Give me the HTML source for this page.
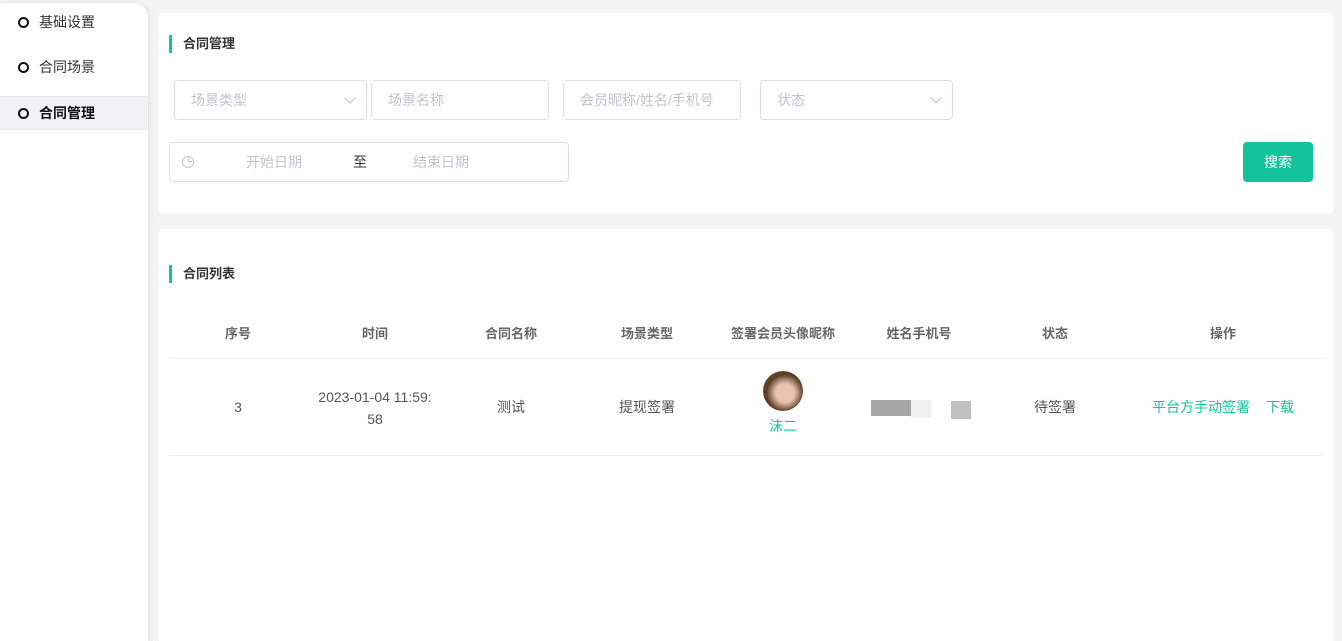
<!DOCTYPE html>
<html style="width:1342px;height:641px;overflow:hidden"><head><meta charset="utf-8"><style>
*{box-sizing:border-box;margin:0;padding:0}
body{width:1342px;height:641px;overflow:hidden;background:#f4f4f4;font-family:"Liberation Sans","Noto Sans CJK SC",sans-serif;position:relative}
.side{position:absolute;left:0;top:3px;width:148px;height:638px;background:#fff;border-top-right-radius:14px;box-shadow:2px 0 4px rgba(0,0,0,.08)}
.mi{position:absolute;left:0;width:148px;height:34px;font-size:14px;color:#333;display:flex;align-items:center;padding-left:18px}
.mi i{width:11px;height:11px;border:2px solid #111;border-radius:50%;margin-right:10px}
.mi.on{background:#f2f2f4;border-top:1px solid #eaeaee;border-bottom:1px solid #eaeaee;font-weight:bold;color:#111}
.card{position:absolute;left:159px;width:1174px;background:#fff;border-radius:3px}
.tt{position:absolute;left:10px;font-size:13px;font-weight:bold;color:#333;padding-left:14px;height:18px;line-height:18px}
.tt:before{content:"";position:absolute;left:0;top:0;width:3px;height:18px;background:#13c39c}
.in{position:absolute;height:40px;border:1px solid #dcdfe6;border-radius:4px;font-size:14px;color:#c0c4cc;line-height:38px;padding-left:16px}
.arr{position:absolute;right:12px;top:13px;width:8px;height:8px;border-right:1px solid #c0c4cc;border-bottom:1px solid #c0c4cc;transform:rotate(45deg)}
.btn{position:absolute;left:1084px;top:129px;width:70px;height:40px;background:#13c39c;color:#fff;border-radius:4px;font-size:14px;text-align:center;line-height:40px}
.th,.td{position:absolute;font-size:14px;text-align:center;transform:translateX(-50%);white-space:nowrap;line-height:18px}
.th{top:96px;color:#666;font-weight:bold;font-size:13px}
.td{color:#555;top:169px}
.line{position:absolute;left:10px;width:1154px;height:1px;background:#ebeef5}
</style></head><body>
<div class="side">
<div class="mi" style="top:2px"><i></i>基础设置</div>
<div class="mi" style="top:47px"><i></i>合同场景</div>
<div class="mi on" style="top:93px"><i></i>合同管理</div>
</div>
<div class="card" style="top:13px;height:200px">
<div class="tt" style="top:22px">合同管理</div>
<div class="in" style="left:15px;top:67px;width:193px">场景类型<span class="arr"></span></div>
<div class="in" style="left:212px;top:67px;width:178px">场景名称</div>
<div class="in" style="left:404px;top:67px;width:178px">会员昵称/姓名/手机号</div>
<div class="in" style="left:601px;top:67px;width:193px">状态<span class="arr"></span></div>
<div class="in" style="left:10px;top:129px;width:400px;padding:0">
<span style="position:absolute;left:12px;top:13px;width:12px;height:12px;border:1px solid #c0c4cc;border-radius:50%"></span>
<span style="position:absolute;left:18px;top:15px;width:4px;height:4px;border-left:1px solid #c0c4cc;border-bottom:1px solid #c0c4cc"></span>
<span style="position:absolute;left:76px">开始日期</span>
<span style="position:absolute;left:183px;color:#333">至</span>
<span style="position:absolute;left:243px">结束日期</span></div>
<div class="btn">搜索</div>
</div>
<div class="card" style="top:229px;height:412px;border-bottom-left-radius:0;border-bottom-right-radius:0">
<div class="tt" style="top:36px">合同列表</div>
<div class="th" style="left:79px">序号</div>
<div class="th" style="left:216px">时间</div>
<div class="th" style="left:352px">合同名称</div>
<div class="th" style="left:488px">场景类型</div>
<div class="th" style="left:624px">签署会员头像昵称</div>
<div class="th" style="left:760px">姓名手机号</div>
<div class="th" style="left:896px">状态</div>
<div class="th" style="left:1064px">操作</div>
<div class="line" style="top:129px"></div>
<div class="td" style="left:79px">3</div>
<div class="td" style="left:216px;top:157px;line-height:22px">2023-01-04 11:59:<br>58</div>
<div class="td" style="left:352px">测试</div>
<div class="td" style="left:488px">提现签署</div>
<div style="position:absolute;left:604px;top:142px;width:40px;height:40px;border-radius:50%;background:radial-gradient(circle at 55% 55%,#e8c4b0 0 30%,#5a3a22 60%,#8a6a40)"></div>
<div class="td" style="left:624px;top:188px;color:#13c39c">沫二</div>
<div style="position:absolute;left:712px;top:171px;width:40px;height:16px;background:#a6a6a6"></div>
<div style="position:absolute;left:752px;top:171px;width:20px;height:18px;background:#f0f0f0"></div>
<div style="position:absolute;left:792px;top:172px;width:20px;height:18px;background:#c0c0c0"></div>
<div class="td" style="left:896px">待签署</div>
<div class="td" style="left:1042px;color:#13c39c">平台方手动签署</div>
<div class="td" style="left:1121px;color:#13c39c">下载</div>
<div class="line" style="top:226px"></div>
</div>
</body></html>
